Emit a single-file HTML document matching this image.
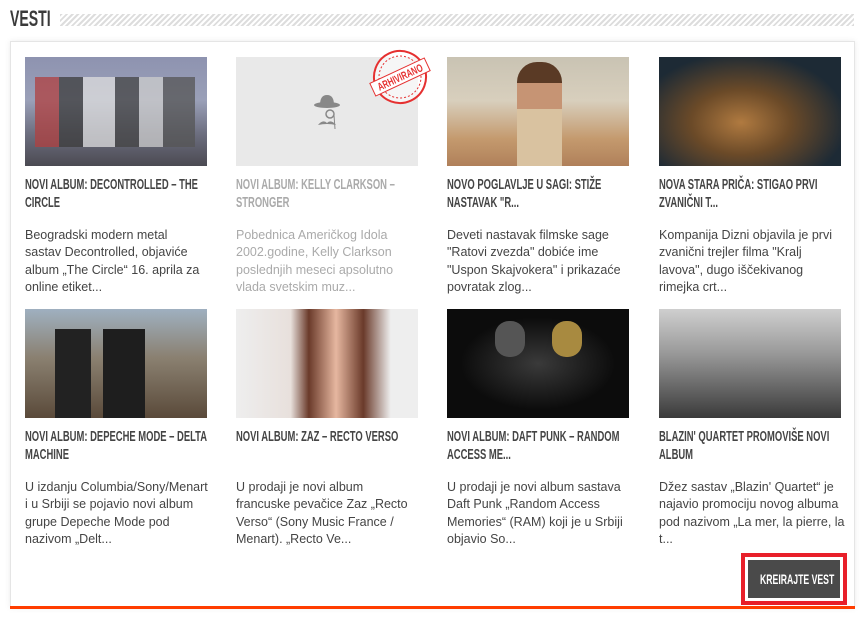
<!DOCTYPE html>
<html><head><meta charset="utf-8"><style>
body{margin:0;width:866px;height:622px;background:#fff;font-family:"Liberation Sans",Arial,sans-serif;position:relative;overflow:hidden}
.hdr{position:absolute;left:10px;top:6px;font-family:"Liberation Sans",sans-serif;font-weight:bold;font-size:22px;color:#3a3a3a;transform:scaleX(0.64);transform-origin:left;white-space:nowrap}
.stripe{position:absolute;left:60px;top:14px;width:794px;height:12px;background:repeating-linear-gradient(135deg,#ddd 0 2px,#fff 2px 4px)}
.panel{position:absolute;left:10px;top:41px;width:843px;height:566px;border:1px solid #e5e5e5;border-bottom:none;box-shadow:0 0 6px rgba(0,0,0,.08)}
.bar{position:absolute;left:10px;top:606px;width:845px;height:3px;background:#ff3d00}
.item{position:absolute;width:182px}
.img{width:182px;height:109px;position:relative;overflow:hidden}
.t{margin-top:10px;width:300px;white-space:nowrap;font-family:"Liberation Sans",sans-serif;font-weight:bold;font-size:14.5px;line-height:18px;color:#444;transform:scaleX(0.65);transform-origin:left;text-transform:uppercase;height:36px}
.d{margin-top:15px;font-size:12.5px;line-height:17.3px;color:#444;white-space:nowrap}
.gray .t,.gray .d{color:#aaa}
.btnw{position:absolute;left:741px;top:553px;width:98px;height:44px;border:4px solid #e8202a;background:#fff}
.btn{position:absolute;left:3px;top:3px;width:92px;height:38px;background:#4a4a4a}
.btn span{position:absolute;left:12px;top:0;color:#fff;font-weight:bold;font-size:14px;line-height:38px;white-space:nowrap;transform:scaleX(0.62);transform-origin:left}
</style></head><body>
<div class="hdr">VESTI</div><div class="stripe"></div>
<div class="panel"></div><div class="bar"></div>

<div class="item" style="left:25px;top:57px"><div class="img" style="background:linear-gradient(180deg,#8e93b0 0%,#9aa0b8 40%,#6d6f80 70%,#4b4a52 100%)"><div style="position:absolute;left:10px;top:20px;width:160px;height:70px;background:linear-gradient(90deg,#b04040 0 15%,#3c3c3c 15% 30%,#ddd 30% 50%,#444 50% 65%,#ccc 65% 80%,#555 80%);opacity:.75"></div></div>
<div class="t">Novi album: Decontrolled – The<br>Circle</div>
<div class="d">Beogradski modern metal<br>sastav Decontrolled, objaviće<br>album „The Circle“ 16. aprila za<br>online etiket...</div></div>

<div class="item gray" style="left:236px;top:57px"><div class="img" style="background:#e9e9e9;overflow:visible">
<svg width="182" height="109" style="position:absolute;left:0;top:0;overflow:visible"><ellipse cx="91" cy="48" rx="13" ry="3" fill="#888"/><path d="M84 48 Q84 38 91 38 Q98 38 98 48Z" fill="#888"/><circle cx="94" cy="57" r="4" fill="none" stroke="#888" stroke-width="1.5"/><path d="M82 68 Q87 62 91 66 Q95 62 100 68 Q91 66 82 68Z" fill="#888"/><line x1="98" y1="58" x2="99" y2="72" stroke="#888"/>
<g transform="translate(164,20) rotate(-25)"><circle r="26" fill="rgba(255,255,255,.6)" stroke="#e53030" stroke-width="2"/><circle r="21" fill="none" stroke="#e53030" stroke-width="1" stroke-dasharray="2 2"/><rect x="-30" y="-7" width="60" height="14" fill="#fff" stroke="#e53030"/><text x="0" y="4" text-anchor="middle" font-family="Liberation Sans,sans-serif" font-weight="bold" font-size="11" fill="#e53030" transform="scale(0.7,1)">ARHIVIRANO</text></g></svg></div>
<div class="t">Novi album: Kelly Clarkson –<br>Stronger</div>
<div class="d">Pobednica Američkog Idola<br>2002.godine, Kelly Clarkson<br>poslednjih meseci apsolutno<br>vlada svetskim muz...</div></div>

<div class="item" style="left:447px;top:57px"><div class="img" style="background:linear-gradient(180deg,#c9c3b3 0%,#d8cfbd 40%,#c49a6e 75%,#b0805a 100%)"><div style="position:absolute;left:70px;top:5px;width:45px;height:104px;border-radius:20px 20px 0 0;background:linear-gradient(180deg,#5a3a25 0 20%,#c69474 20% 45%,#d9c2a0 45%)"></div></div>
<div class="t">Novo poglavlje u sagi: Stiže<br>nastavak "R...</div>
<div class="d">Deveti nastavak filmske sage<br>"Ratovi zvezda" dobiće ime<br>"Uspon Skajvokera" i prikazaće<br>povratak zlog...</div></div>

<div class="item" style="left:659px;top:57px"><div class="img" style="background:radial-gradient(ellipse at 45% 60%,#b07a40 0%,#6b4a28 35%,#1d2a35 75%)"></div>
<div class="t">Nova stara priča: Stigao prvi<br>zvanični t...</div>
<div class="d">Kompanija Dizni objavila je prvi<br>zvanični trejler filma "Kralj<br>lavova", dugo iščekivanog<br>rimejka crt...</div></div>

<div class="item" style="left:25px;top:309px"><div class="img" style="background:linear-gradient(180deg,#9fb0c0 0%,#8a8070 45%,#5a4a3a 100%)"><div style="position:absolute;left:30px;top:20px;width:120px;height:89px;background:linear-gradient(90deg,#222 0 30%,transparent 30% 40%,#1e1e1e 40% 75%,transparent 75%)"></div></div>
<div class="t">Novi album: Depeche Mode – Delta<br>Machine</div>
<div class="d">U izdanju Columbia/Sony/Menart<br>i u Srbiji se pojavio novi album<br>grupe Depeche Mode pod<br>nazivom „Delt...</div></div>

<div class="item" style="left:236px;top:309px"><div class="img" style="background:linear-gradient(90deg,#eee 0%,#e8e0dc 30%,#6a3a2a 40%,#e6b7a0 55%,#6a3a2a 70%,#eee 85%)"></div>
<div class="t">Novi album: ZAZ – Recto Verso</div>
<div class="d">U prodaji je novi album<br>francuske pevačice Zaz „Recto<br>Verso“ (Sony Music France /<br>Menart). „Recto Ve...</div></div>

<div class="item" style="left:447px;top:309px"><div class="img" style="background:radial-gradient(ellipse at 50% 50%,#3a3a3a 0%,#0c0c0c 60%)"><div style="position:absolute;left:48px;top:12px;width:30px;height:36px;border-radius:14px;background:#555"></div><div style="position:absolute;left:105px;top:12px;width:30px;height:36px;border-radius:14px;background:#a88a40"></div></div>
<div class="t">Novi album: Daft Punk – Random<br>Access Me...</div>
<div class="d">U prodaji je novi album sastava<br>Daft Punk „Random Access<br>Memories“ (RAM) koji je u Srbiji<br>objavio So...</div></div>

<div class="item" style="left:659px;top:309px"><div class="img" style="background:linear-gradient(180deg,#cfcfcf 0%,#9a9a9a 40%,#3a3a3a 100%)"></div>
<div class="t">Blazin' Quartet promoviše novi<br>album</div>
<div class="d">Džez sastav „Blazin' Quartet“ je<br>najavio promociju novog albuma<br>pod nazivom „La mer, la pierre, la<br>t...</div></div>

<div class="btnw"><div class="btn"><span>KREIRAJTE VEST</span></div></div>
</body></html>
